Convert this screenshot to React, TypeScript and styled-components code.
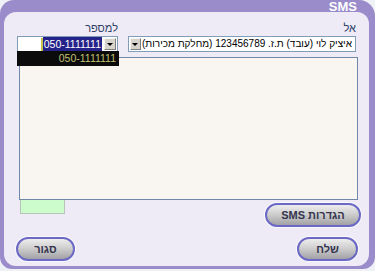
import React from "react";
import styled, { createGlobalStyle } from "styled-components";

const GlobalStyle = createGlobalStyle`
  html, body { margin: 0; padding: 0; background: #eef1f6; }
  body { font-family: "Liberation Sans", Arial, sans-serif; width: 375px; height: 271px; overflow: hidden; }
`;

const Frame = styled.div`
  width: 375px;
  height: 269px;
  box-sizing: border-box;
  background: #9a8ccb;
  border-radius: 14px 16px 12px 12px;
  display: flex;
  flex-direction: column;
`;

const TitleBar = styled.div`
  height: 12px;
  line-height: 13px;
  padding-right: 18px;
  text-align: right;
  color: #ffffff;
  font-weight: bold;
  font-size: 13px;
`;

const Panel = styled.div`
  flex: 1;
  margin: 0 6px 3px 4px;
  background: #eeebf7;
  border-radius: 12px;
  padding: 10px 13px 0 13px;
  display: flex;
  flex-direction: column;
  direction: rtl;
`;

const FieldsRow = styled.div`
  display: flex;
  gap: 10px;
`;

const Field = styled.div<{ $w: number }>`
  width: ${(p) => p.$w}px;
  position: relative;
  display: flex;
  flex-direction: column;
`;

const Label = styled.div`
  height: 14px;
  line-height: 12px;
  font-size: 11px;
  color: #2f3f66;
  text-align: right;
`;

const Combo = styled.div<{ $ltr?: boolean }>`
  height: 16px;
  box-sizing: border-box;
  border: 1px solid #7f9db9;
  background: #ffffff;
  display: flex;
  align-items: center;
  direction: ${(p) => (p.$ltr ? "ltr" : "rtl")};
`;

const ComboText = styled.div`
  flex: 1;
  font-size: 10px;
  line-height: 14px;
  padding: 0 3px 0 0;
  color: #000;
  white-space: nowrap;
  text-align: right;
`;

const PhoneValue = styled.div`
  flex: 1;
  display: flex;
  justify-content: flex-end;
  align-items: center;
  height: 14px;
  padding-right: 1px;
`;

const Caret = styled.span`
  width: 2px;
  height: 13px;
  background: #c9c24a;
`;

const Selected = styled.span`
  background: #25238a;
  color: #ffffff;
  font-size: 10.5px;
  line-height: 14px;
  padding: 0 1px;
`;

const DropButton = styled.div`
  width: 12px;
  height: 12px;
  margin: 0 1px;
  box-sizing: border-box;
  background: #d6d3cc;
  border: 1px solid;
  border-color: #f4f4f4 #808080 #808080 #f4f4f4;
  display: flex;
  align-items: center;
  justify-content: center;
`;

const Arrow = styled.div`
  width: 0;
  height: 0;
  border-left: 3px solid transparent;
  border-right: 3px solid transparent;
  border-top: 3px solid #000;
`;

const DropList = styled.div`
  position: absolute;
  top: 29px;
  left: 0;
  width: 102px;
  height: 15px;
  background: #0b0b0b;
  color: #c2c070;
  font-size: 10.5px;
  line-height: 15px;
  text-align: right;
  padding-right: 3px;
  box-sizing: border-box;
  z-index: 2;
`;

const MessageBox = styled.textarea`
  margin: 5px -2px 0 2px;
  height: 143px;
  box-sizing: border-box;
  border: 1px solid #6f88aa;
  background: #f9f5f1;
  resize: none;
  outline: none;
  padding: 2px;
  font-family: "Liberation Sans", Arial, sans-serif;
`;

const ActionRow = styled.div`
  display: flex;
  justify-content: space-between;
  align-items: flex-start;
`;

const StatusBox = styled.div`
  width: 45px;
  height: 14px;
  margin-left: 3px;
  box-sizing: border-box;
  background: #ccfccc;
  border: 1px solid #b8c4b8;
  border-top: none;
`;

const PillButton = styled.button<{ $w: number; $edge: number }>`
  width: ${(p) => p.$w}px;
  height: 24px;
  margin-right: ${(p) => p.$edge}px;
  margin-left: ${(p) => p.$edge}px;
  border-radius: 12px;
  border: 2px solid #6c69c6;
  box-shadow: 0 0 0 1px rgba(255, 255, 255, 0.7);
  background: linear-gradient(#ededed 0%, #cfcfcf 45%, #a2a2a6 100%);
  color: #34344e;
  font-family: "Liberation Sans", Arial, sans-serif;
  font-weight: bold;
  font-size: 11px;
  padding: 0;
  direction: rtl;
  cursor: pointer;
`;

const SettingsButton = styled(PillButton)`
  margin-top: 3px;
  margin-left: 0;
`;

const BottomRow = styled.div`
  display: flex;
  justify-content: space-between;
  margin-top: 10px;
`;

export default function App() {
  return (
    <>
      <GlobalStyle />
      <Frame>
        <TitleBar>SMS</TitleBar>
        <Panel>
          <FieldsRow>
            <Field $w={228}>
              <Label>אל</Label>
              <Combo>
                <ComboText>איציק לוי (עובד) ת.ז. 123456789 (מחלקת מכירות)</ComboText>
                <DropButton>
                  <Arrow />
                </DropButton>
              </Combo>
            </Field>
            <Field $w={101}>
              <Label>למספר</Label>
              <Combo $ltr>
                <PhoneValue>
                  <Caret />
                  <Selected>050-1111111</Selected>
                </PhoneValue>
                <DropButton>
                  <Arrow />
                </DropButton>
              </Combo>
              <DropList>050-1111111</DropList>
            </Field>
          </FieldsRow>
          <MessageBox />
          <ActionRow>
            <SettingsButton $w={96} $edge={-5}>הגדרות SMS</SettingsButton>
            <StatusBox />
          </ActionRow>
          <BottomRow>
            <PillButton $w={61} $edge={-2}>שלח</PillButton>
            <PillButton $w={59} $edge={-1}>סגור</PillButton>
          </BottomRow>
        </Panel>
      </Frame>
    </>
  );
}
